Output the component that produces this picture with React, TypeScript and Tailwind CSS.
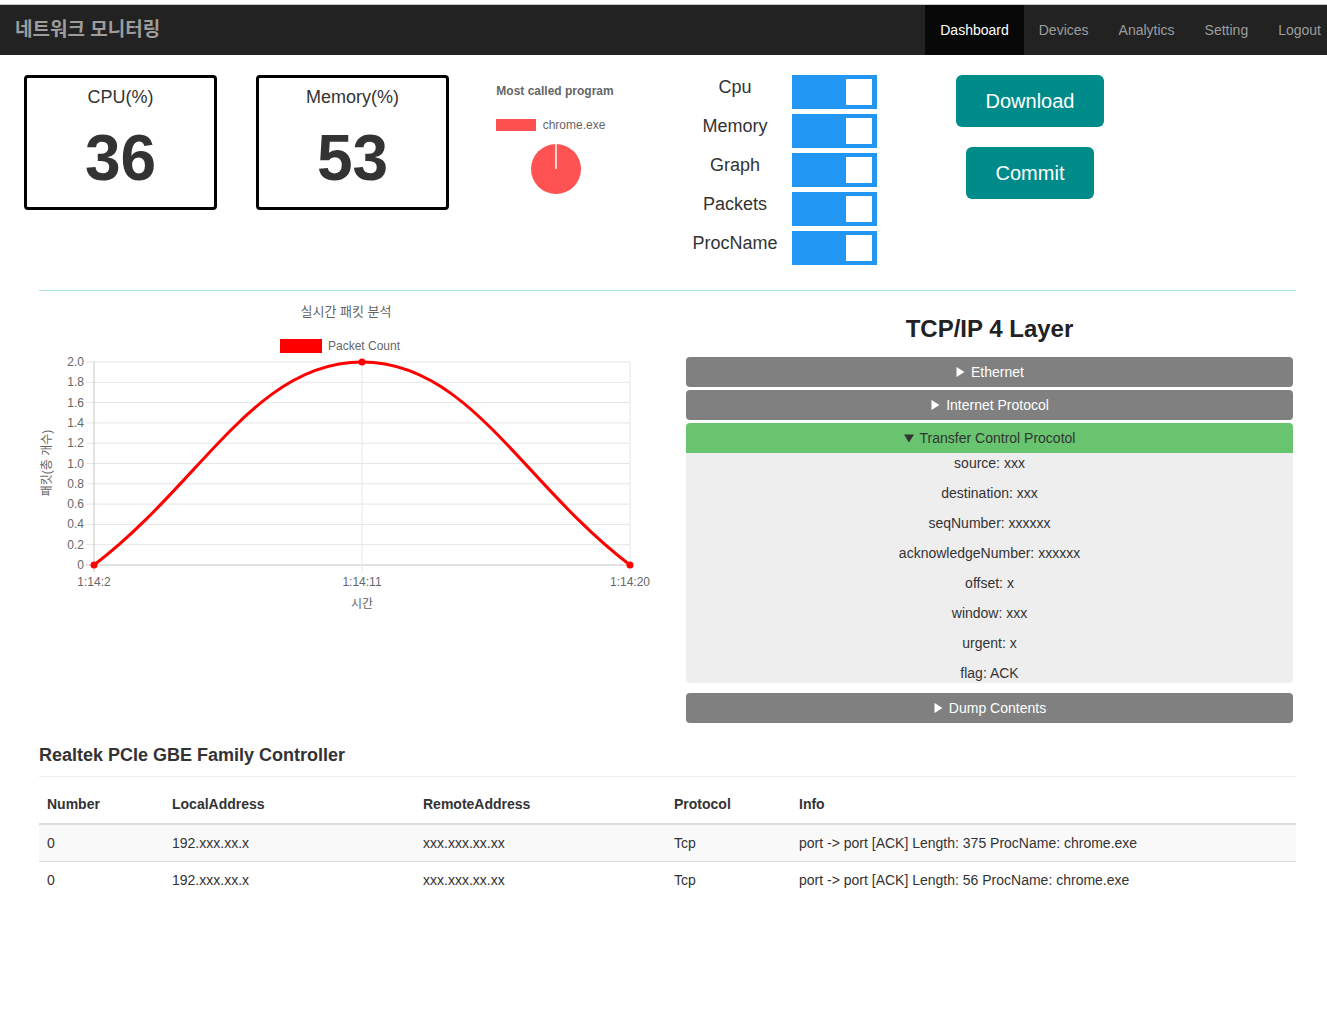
import React from "react";

const navItems = ["Dashboard", "Devices", "Analytics", "Setting", "Logout"] as const;
const toggles = ["Cpu", "Memory", "Graph", "Packets", "ProcName"] as const;
const tcpFields = [
  "source: xxx",
  "destination: xxx",
  "seqNumber: xxxxxx",
  "acknowledgeNumber: xxxxxx",
  "offset: x",
  "window: xxx",
  "urgent: x",
  "flag: ACK",
];
const rows = [
  { n: "0", local: "192.xxx.xx.x", remote: "xxx.xxx.xx.xx", proto: "Tcp", info: "port -> port [ACK] Length: 375 ProcName: chrome.exe" },
  { n: "0", local: "192.xxx.xx.x", remote: "xxx.xxx.xx.xx", proto: "Tcp", info: "port -> port [ACK] Length: 56 ProcName: chrome.exe" },
];

function Arrow({ down }: { down?: boolean }) {
  return (
    <svg width="10" height="10" viewBox="0 0 10 10" className="mr-[6px] inline-block" aria-hidden>
      {down ? <polygon points="0,1.5 10,1.5 5,9.5" fill="currentColor" /> : <polygon points="1.5,0 9.5,5 1.5,10" fill="currentColor" />}
    </svg>
  );
}

function StatCard({ label, value }: { label: string; value: string }) {
  return (
    <div className="flex h-[135px] w-[193px] flex-col items-center rounded-[4px] border-[3px] border-black">
      <div className="mt-[9px] text-[18px] leading-[20px] text-[#333]">{label}</div>
      <div className="mt-[19px] text-[64px] font-bold leading-[64px] text-[#333]">{value}</div>
    </div>
  );
}

function PacketChart() {
  const ticks = [2.0, 1.8, 1.6, 1.4, 1.2, 1.0, 0.8, 0.6, 0.4, 0.2, 0];
  const y = (v: number) => 265 - v * 101.5;
  return (
    <svg width="621" height="320" className="font-['Liberation_Sans',_'Noto_Sans_CJK_KR',_sans-serif]">
      <text x="307" y="16" textAnchor="middle" fontSize="13" fill="#666">
        실시간 패킷 분석
      </text>
      <rect x="241" y="39" width="42" height="14" fill="#ff0000" />
      <text x="289" y="50" fontSize="12" fill="#666">
        Packet Count
      </text>
      {ticks.map((v) => (
        <g key={v}>
          <line x1="47" x2="591" y1={y(v)} y2={y(v)} stroke={v === 0 ? "#c4c4c4" : "#e6e6e6"} strokeWidth="1" />
          <text x="45" y={y(v) + 4} textAnchor="end" fontSize="12" fill="#666">
            {v === 0 ? "0" : v.toFixed(1)}
          </text>
        </g>
      ))}
      {[55, 323, 591].map((x) => (
        <line key={x} x1={x} x2={x} y1="62" y2="272" stroke={x === 55 ? "#c4c4c4" : "#e6e6e6"} strokeWidth="1" />
      ))}
      <text x="55" y="286" textAnchor="middle" fontSize="12" fill="#666">1:14:2</text>
      <text x="323" y="286" textAnchor="middle" fontSize="12" fill="#666">1:14:11</text>
      <text x="591" y="286" textAnchor="middle" fontSize="12" fill="#666">1:14:20</text>
      <text x="323" y="308" textAnchor="middle" fontSize="12" fill="#666">시간</text>
      <text x="9" y="163" textAnchor="middle" dominantBaseline="middle" fontSize="12" fill="#666" transform="rotate(-90 9 163)">
        패킷(총 개수)
      </text>
      <path
        d="M55,265 C162.2,183.8 215.8,62 323,62 C430.2,62 483.8,183.8 591,265"
        fill="none"
        stroke="#ff0000"
        strokeWidth="3"
      />
      {[
        [55, 265],
        [323, 62],
        [591, 265],
      ].map(([cx, cy]) => (
        <circle key={cx} cx={cx} cy={cy} r="3.5" fill="#ff0000" />
      ))}
    </svg>
  );
}

export default function App() {
  return (
    <div className="min-h-[1030px] bg-white pt-[4px] font-['Liberation_Sans',_'Noto_Sans_CJK_KR',_sans-serif] text-[14px] text-[#333]">
      <header className="flex h-[51px] items-stretch overflow-hidden border-t border-[#c8c8c8] bg-[#222]">
        <div className="flex items-center pl-[15px] text-[19px] font-bold text-[#9d9d9d]">네트워크 모니터링</div>
        <nav className="ml-auto mr-[-9px] flex">
          {navItems.map((item, i) => (
            <a
              key={item}
              href="#"
              className={
                i === 0
                  ? "flex items-center bg-[#080808] px-[15px] text-white"
                  : "flex items-center px-[15px] text-[#9d9d9d]"
              }
            >
              {item}
            </a>
          ))}
        </nav>
      </header>

      <div className="mt-[20px] flex items-start">
        <div className="ml-[24px]">
          <StatCard label="CPU(%)" value="36" />
        </div>
        <div className="ml-[39px]">
          <StatCard label="Memory(%)" value="53" />
        </div>

        <div className="ml-[41px] flex w-[130px] flex-col items-center">
          <div className="mt-[8px] text-[12px] font-bold leading-[16px] text-[#666]">Most called program</div>
          <div className="mr-[9px] mt-[20px] flex h-[12px] items-center gap-[7px]">
            <span className="h-[12px] w-[40px] bg-[#ff5050]" />
            <span className="text-[12px] text-[#666]">chrome.exe</span>
          </div>
          <svg width="52" height="52" className="mt-[12px] ml-[2px]" aria-hidden>
            <circle cx="26" cy="26" r="25" fill="#ff5252" />
            <line x1="26" y1="26" x2="26" y2="1" stroke="#fff" strokeWidth="1.5" />
          </svg>
        </div>

        <div className="ml-[60px] flex flex-col gap-[5px]">
          {toggles.map((t) => (
            <div key={t} className="flex h-[34px]">
              <div className="w-[110px] text-center text-[18px] leading-[24px] text-[#333]">{t}</div>
              <div className="ml-[2px] flex h-[34px] w-[85px] items-center justify-end bg-[#2196f3] pr-[5px]">
                <span className="h-[26px] w-[26px] bg-white" />
              </div>
            </div>
          ))}
        </div>

        <div className="ml-[79px] flex w-[148px] flex-col items-center">
          <button className="h-[52px] w-[148px] rounded-[6px] bg-[#008b8b] text-[20px] text-white">Download</button>
          <button className="mt-[20px] h-[52px] w-[128px] rounded-[6px] bg-[#008b8b] text-[20px] text-white">Commit</button>
        </div>
      </div>

      <div className="mx-[39px] mt-[25px] w-[1257px] border-t border-[#a9e3e3]" />

      <div className="mx-[39px] mt-[9px] flex w-[1257px] items-start">
        <div className="w-[621px]">
          <PacketChart />
        </div>
        <div className="ml-[26px] w-[607px]">
          <h2 className="mt-[13px] text-center text-[24px] font-bold leading-[32px] text-[#222]">TCP/IP 4 Layer</h2>
          <div className="mt-[12px] flex flex-col">
            <div className="flex h-[30px] items-center justify-center rounded-[4px] bg-[#808080] text-white">
              <Arrow />Ethernet
            </div>
            <div className="mt-[3px] flex h-[30px] items-center justify-center rounded-[4px] bg-[#808080] text-white">
              <Arrow />Internet Protocol
            </div>
            <div className="mt-[3px] flex h-[30px] items-center justify-center rounded-t-[4px] bg-[#68c46f] text-[#333]">
              <Arrow down />Transfer Control Procotol
            </div>
            <div className="flex flex-col gap-[10px] rounded-b-[4px] bg-[#eeeeee]">
              {tcpFields.map((f) => (
                <div key={f} className="text-center leading-[20px]">
                  {f}
                </div>
              ))}
            </div>
            <div className="mt-[10px] flex h-[30px] items-center justify-center rounded-[4px] bg-[#808080] text-white">
              <Arrow />Dump Contents
            </div>
          </div>
        </div>
      </div>

      <div className="mx-[39px] w-[1257px]">
        <h3 className="mt-[20px] text-[18px] font-bold leading-[24px] text-[#333]">Realtek PCIe GBE Family Controller</h3>
        <div className="mt-[9px] border-t border-[#eee]" />
        <table className="mt-[9px] w-full border-collapse text-left">
          <thead>
            <tr className="border-b-2 border-[#ddd]">
              <th className="w-[125px] px-[8px] pb-[9px] pt-[8px] font-bold leading-[20px]">Number</th>
              <th className="w-[251px] px-[8px] pb-[9px] pt-[8px] font-bold leading-[20px]">LocalAddress</th>
              <th className="w-[251px] px-[8px] pb-[9px] pt-[8px] font-bold leading-[20px]">RemoteAddress</th>
              <th className="w-[125px] px-[8px] pb-[9px] pt-[8px] font-bold leading-[20px]">Protocol</th>
              <th className="px-[8px] pb-[9px] pt-[8px] font-bold leading-[20px]">Info</th>
            </tr>
          </thead>
          <tbody>
            {rows.map((r, i) => (
              <tr key={i} className={i === 0 ? "bg-[#f9f9f9]" : "border-t border-[#ddd]"}>
                <td className="px-[8px] py-[8px] leading-[20px]">{r.n}</td>
                <td className="px-[8px] py-[8px] leading-[20px]">{r.local}</td>
                <td className="px-[8px] py-[8px] leading-[20px]">{r.remote}</td>
                <td className="px-[8px] py-[8px] leading-[20px]">{r.proto}</td>
                <td className="px-[8px] py-[8px] leading-[20px]">{r.info}</td>
              </tr>
            ))}
          </tbody>
        </table>
      </div>
    </div>
  );
}
